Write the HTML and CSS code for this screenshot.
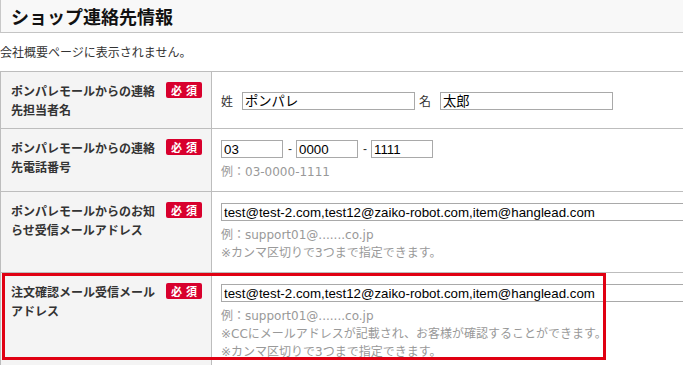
FILE: index.html
```html
<!DOCTYPE html>
<html lang="ja">
<head>
  <meta charset="UTF-8" />
  <meta name="viewport" content="width=device-width, initial-scale=1.0"/>
  <title>ショップ連絡先情報</title>
  <link rel="stylesheet" href="styles.css">
</head>
<body>
  <div class="page">
    <div class="section-head">
      <h2>ショップ連絡先情報</h2>
    </div>
    <p class="lead">会社概要ページに表示されません。</p>

    <div class="form-wrap">
      <table class="form-table">
        <tr>
          <th>
            <div class="label"><span class="label-text">ポンパレモールからの連絡先担当者名</span><span class="req">必須</span></div>
          </th>
          <td>
            <div class="field-row">
              <span class="field-name">姓</span><input class="txt name" type="text" value="ポンパレ"><span class="field-name second">名</span><input class="txt name" type="text" value="太郎">
            </div>
          </td>
        </tr>
        <tr>
          <th>
            <div class="label"><span class="label-text">ポンパレモールからの連絡先電話番号</span><span class="req">必須</span></div>
          </th>
          <td>
            <div class="field-row">
              <input class="txt tel" type="text" value="03"><span class="dash">-</span><input class="txt tel" type="text" value="0000"><span class="dash">-</span><input class="txt tel" type="text" value="1111">
            </div>
            <p class="note">例：03-0000-1111</p>
          </td>
        </tr>
        <tr>
          <th>
            <div class="label"><span class="label-text">ポンパレモールからのお知らせ受信メールアドレス</span><span class="req">必須</span></div>
          </th>
          <td>
            <div class="field-row">
              <input class="txt mail" type="text" value="test@test-2.com,test12@zaiko-robot.com,item@hanglead.com">
            </div>
            <p class="note">例：support01@.......co.jp<br>※カンマ区切りで3つまで指定できます。</p>
          </td>
        </tr>
        <tr>
          <th>
            <div class="label"><span class="label-text">注文確認メール受信メールアドレス</span><span class="req">必須</span></div>
          </th>
          <td>
            <div class="field-row">
              <input class="txt mail" type="text" value="test@test-2.com,test12@zaiko-robot.com,item@hanglead.com">
            </div>
            <p class="note">例：support01@.......co.jp<br>※CCにメールアドレスが記載され、お客様が確認することができます。<br>※カンマ区切りで3つまで指定できます。</p>
          </td>
        </tr>
      </table>
      <!-- annotation frame over the last row -->
      <div class="highlight"></div>
    </div>
  </div>
</body>
</html>
```

FILE: styles.css
```css
* {
  box-sizing: border-box;
}

html, body {
  margin: 0;
  overflow: hidden;
  background: #fff;
  font-family: "Noto Sans CJK JP", sans-serif;
  color: #333;
}

.page {
  width: 820px;
}

.section-head {
  height: 33px;
  background: #f8f8f8;
  border-left: 1px solid #c8c8c8;
  border-bottom: 1px solid #c4c4c4;
  padding-left: 10px;
}

.section-head h2 {
  margin: 0;
  font-size: 18px;
  font-weight: bold;
  line-height: 32px;
  color: #111;
}

.lead {
  margin: 10px 0;
  font-size: 12px;
  line-height: 18px;
}

.form-wrap {
  position: relative;
}

.form-table {
  width: 820px;
  table-layout: fixed;
  border-collapse: separate;
  border-spacing: 0;
  border-top: 1px solid #bdbdbd;
  border-left: 1px solid #bdbdbd;
}

.form-table th,
.form-table td {
  border-right: 1px solid #bdbdbd;
  border-bottom: 1px solid #bdbdbd;
}

.form-table th {
  width: 211px;
  padding: 9px 9px 9px 10px;
  background: #f4f4f4;
  vertical-align: top;
  text-align: left;
}

.form-table td {
  padding: 11px 10px 10px 9px;
  vertical-align: middle;
}

.label {
  display: flex;
  justify-content: space-between;
  align-items: flex-start;
}

.label-text {
  width: 150px;
  font-size: 12px;
  font-weight: bold;
  line-height: 19px;
  color: #333;
}

.req {
  display: inline-block;
  flex: none;
  width: 36px;
  height: 16px;
  margin-top: 1px;
  padding-left: 4px;
  border-radius: 2px;
  background: #d8002d;
  color: #fff;
  font-size: 11px;
  font-weight: bold;
  line-height: 16px;
  letter-spacing: 4px;
  text-align: center;
}

.field-row {
  display: flex;
  align-items: center;
  height: 18px;
}

.field-name {
  margin-right: 9px;
  font-size: 12px;
  color: #333;
}

.field-name.second {
  margin-left: 4px;
}

.dash {
  margin: 0 4px 0 5px;
  font-family: "Liberation Sans", sans-serif;
  font-size: 12px;
  color: #333;
}

.txt {
  height: 18px;
  margin: 0;
  padding: 0 2px;
  border: 1px solid #a9a9a9;
  border-radius: 0;
  background: #fff;
  font-family: "Liberation Sans", "Noto Sans CJK JP", sans-serif;
  font-size: 13.3px;
  line-height: 16px;
  color: #000;
  outline: none;
}

.txt.name {
  width: 173px;
}

.txt.tel {
  width: 62px;
}

.txt.mail {
  width: 560px;
}

.note {
  margin: 5px 0 0;
  font-family: "DejaVu Sans", "Noto Sans CJK JP", sans-serif;
  font-size: 12px;
  line-height: 18px;
  color: #999;
}

.highlight {
  position: absolute;
  left: 2px;
  top: 202px;
  width: 604px;
  height: 87px;
  border: 3px solid #e00012;
  pointer-events: none;
}
```
